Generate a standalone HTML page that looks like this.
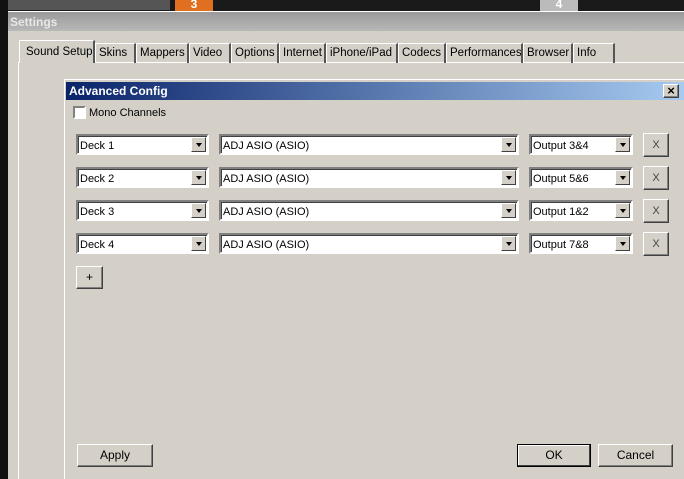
<!DOCTYPE html>
<html><head><style>
*{margin:0;padding:0;box-sizing:border-box}
body{width:684px;height:479px;overflow:hidden;background:#d4d0c8;font-family:"Liberation Sans",sans-serif;font-size:11px;color:#000;position:relative}
.abs{position:absolute}
.tab{position:absolute;top:43px;height:20px;border-top:1px solid #fff;border-left:1px solid #fff;border-right:2px solid #555;padding:3px 0 0 3px;font-size:11.5px;white-space:nowrap;overflow:hidden}
.combo{position:absolute;height:21px;background:#fff;border:2px solid;border-color:#808080 #fff #fff #808080;box-shadow:inset 1px 1px 0 #404040;padding:4px 2px;font-size:11px}
.combo .ar{position:absolute;right:1px;top:1px;width:15px;height:15px;background:#d4d0c8;border:1px solid;border-color:#fff #404040 #404040 #fff}
.combo .ar:after{content:"";position:absolute;left:4px;top:5px;border-left:3px solid transparent;border-right:3px solid transparent;border-top:4px solid #000}
.btn{position:absolute;background:#d4d0c8;border:1px solid;border-color:#fff #404040 #404040 #fff;box-shadow:inset -1px -1px 0 #808080;text-align:center;font-size:12px}
</style></head><body>
<div class="abs" style="left:0;top:0;width:684px;height:12px;background:#1a1a1a"></div>
<div class="abs" style="left:0;top:0;width:170px;height:10px;background:#555"></div>
<div class="abs" style="left:175px;top:0;width:38px;height:11px;background:#e07020;color:#fff;font-weight:bold;text-align:center;font-size:12px;line-height:8px">3</div>
<div class="abs" style="left:540px;top:0;width:38px;height:11px;background:#bbb;color:#fff;font-weight:bold;text-align:center;font-size:12px;line-height:8px">4</div>
<div class="abs" style="left:0;top:0;width:8px;height:479px;background:#111"></div>
<div class="abs" style="left:8px;top:11px;width:676px;height:1px;background:#fff"></div>
<div class="abs" style="left:8px;top:12px;width:676px;height:19px;background:linear-gradient(#9a9a9a,#b8b8b8);color:#e8e8e8;font-weight:bold;font-size:12px;padding:3px 2px">Settings</div>
<div class="abs" style="left:8px;top:31px;width:676px;height:448px;background:#d4d0c8"></div>
<div class="abs" style="left:18px;top:62px;width:1px;height:417px;background:#fff"></div>
<div class="abs" style="left:18px;top:62px;width:666px;height:1px;background:#fff"></div>
<div class="tab" style="left:19px;top:40px;width:76px;height:23px;background:#d4d0c8;padding-top:5px;padding-left:6px">Sound Setup</div>
<div class="tab" style="left:95px;width:41px">Skins</div>
<div class="tab" style="left:136px;width:53px">Mappers</div>
<div class="tab" style="left:189px;width:42px">Video</div>
<div class="tab" style="left:231px;width:48px">Options</div>
<div class="tab" style="left:279px;width:47px">Internet</div>
<div class="tab" style="left:326px;width:72px">iPhone/iPad</div>
<div class="tab" style="left:398px;width:48px">Codecs</div>
<div class="tab" style="left:446px;width:77px">Performances</div>
<div class="tab" style="left:523px;width:50px">Browser</div>
<div class="tab" style="left:573px;width:42px">Info</div>
<div class="abs" style="left:64px;top:79px;width:1px;height:400px;background:#fff"></div>
<div class="abs" style="left:64px;top:79px;width:620px;height:1px;background:#fff"></div>
<div class="abs" style="left:66px;top:82px;width:618px;height:18px;background:linear-gradient(90deg,#0a246a,#a6caf0);color:#fff;font-weight:bold;font-size:12px;padding:2px 3px">Advanced Config</div>
<div class="btn" style="left:663px;top:84px;width:16px;height:14px;font-size:13px;line-height:11px;font-weight:bold">×</div>
<div class="abs" style="left:73px;top:106px;width:13px;height:13px;background:#fff;border:2px solid;border-color:#808080 #fff #fff #808080"></div>
<div class="abs" style="left:89px;top:107px;font-size:11px">Mono Channels</div>

<div class="combo" style="left:76px;top:134px;width:133px">Deck 1<div class="ar"></div></div>
<div class="combo" style="left:219px;top:134px;width:300px">ADJ ASIO (ASIO)<div class="ar"></div></div>
<div class="combo" style="left:529px;top:134px;width:104px">Output 3&amp;4<div class="ar"></div></div>
<div class="btn" style="left:643px;top:133px;width:26px;height:24px;line-height:22px;color:#444;font-size:11px">X</div>

<div class="combo" style="left:76px;top:167px;width:133px">Deck 2<div class="ar"></div></div>
<div class="combo" style="left:219px;top:167px;width:300px">ADJ ASIO (ASIO)<div class="ar"></div></div>
<div class="combo" style="left:529px;top:167px;width:104px">Output 5&amp;6<div class="ar"></div></div>
<div class="btn" style="left:643px;top:166px;width:26px;height:24px;line-height:22px;color:#444;font-size:11px">X</div>

<div class="combo" style="left:76px;top:200px;width:133px">Deck 3<div class="ar"></div></div>
<div class="combo" style="left:219px;top:200px;width:300px">ADJ ASIO (ASIO)<div class="ar"></div></div>
<div class="combo" style="left:529px;top:200px;width:104px">Output 1&amp;2<div class="ar"></div></div>
<div class="btn" style="left:643px;top:199px;width:26px;height:24px;line-height:22px;color:#444;font-size:11px">X</div>

<div class="combo" style="left:76px;top:233px;width:133px">Deck 4<div class="ar"></div></div>
<div class="combo" style="left:219px;top:233px;width:300px">ADJ ASIO (ASIO)<div class="ar"></div></div>
<div class="combo" style="left:529px;top:233px;width:104px">Output 7&amp;8<div class="ar"></div></div>
<div class="btn" style="left:643px;top:232px;width:26px;height:24px;line-height:22px;color:#444;font-size:11px">X</div>

<div class="btn" style="left:76px;top:266px;width:27px;height:23px;line-height:21px">+</div>
<div class="btn" style="left:77px;top:444px;width:76px;height:23px;line-height:21px">Apply</div>
<div class="btn" style="left:517px;top:444px;width:74px;height:23px;line-height:20px;border:1px solid #000;box-shadow:inset -1px -1px 0 #404040,inset 1px 1px 0 #fff">OK</div>
<div class="btn" style="left:598px;top:444px;width:75px;height:23px;line-height:21px">Cancel</div>
</body></html>
